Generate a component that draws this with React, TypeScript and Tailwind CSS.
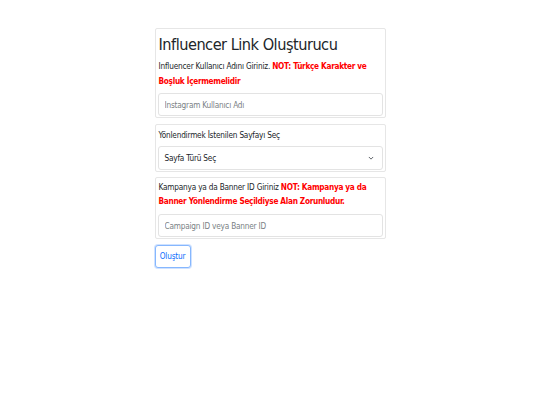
const font = { fontFamily: '"DejaVu Sans Condensed", "DejaVu Sans", sans-serif' };

export default function App() {
  return (
    <div className="min-h-[405px] bg-white text-[#212529]" style={font}>
      <div className="mx-auto w-[231px] pt-[28px] flex flex-col gap-[6px]">
        <div className="border border-[#e6e6e6] rounded-[2px] px-[2px] pt-[4px] pb-[1px]">
          <h1 className="text-[16.2px] leading-[23px] tracking-[-0.5px] text-[#212529] mb-[3px] ml-[1px]">Influencer Link Oluşturucu</h1>
          <p className="text-[8.2px] leading-[15px] tracking-[-0.2px] ml-[1px]">
            Influencer Kullanıcı Adını Giriniz. <b className="text-[#ff0000] tracking-[-0.3px]">NOT: Türkçe Karakter ve Boşluk İçermemelidir</b>
          </p>
          <input
            className="mt-[4px] w-full h-[23px] border border-[#e3e3e3] rounded-[3px] px-[6px] text-[8.2px] tracking-[-0.2px] placeholder-[#7a7f85] outline-none"
            placeholder="Instagram Kullanıcı Adı"
            style={font}
          />
        </div>
        <div className="border border-[#e6e6e6] rounded-[2px] px-[2px] pt-[3px] pb-[1px]">
          <p className="text-[8.2px] leading-[15px] tracking-[-0.2px] ml-[1px]">Yönlendirmek İstenilen Sayfayı Seç</p>
          <div className="mt-[3px] h-[24px] border border-[#e3e3e3] rounded-[3px] px-[6px] flex items-center justify-between text-[8.2px] tracking-[-0.2px]">
            <span>Sayfa Türü Seç</span>
            <svg width="6" height="6" viewBox="0 0 16 16" fill="none" stroke="#555b61" strokeWidth="2.5" strokeLinecap="round" strokeLinejoin="round" className="mr-[2px]">
              <path d="M3 6l5 5 5-5" />
            </svg>
          </div>
        </div>
        <div className="border border-[#e6e6e6] rounded-[2px] px-[2px] pt-[2px] pb-[1px] -mt-[1px]">
          <p className="text-[8.2px] leading-[14px] tracking-[-0.2px] ml-[1px]">
            Kampanya ya da Banner ID Giriniz <b className="text-[#ff0000] tracking-[-0.3px]">NOT: Kampanya ya da Banner Yönlendirme Seçildiyse Alan Zorunludur.</b>
          </p>
          <input
            className="mt-[6px] w-full h-[23px] border border-[#e3e3e3] rounded-[3px] px-[6px] text-[8.2px] tracking-[-0.2px] placeholder-[#7a7f85] outline-none"
            placeholder="Campaign ID veya Banner ID"
            style={font}
          />
        </div>
        <div className="flex">
          <button
            className="h-[23px] w-[36px] border border-[#86b7fe] rounded-[3px] text-[8.2px] tracking-[-0.2px] text-[#0d6efd] bg-white shadow-[0_0_0_1px_rgba(13,110,253,0.2)]"
            style={font}
          >
            Oluştur
          </button>
        </div>
      </div>
    </div>
  );
}
